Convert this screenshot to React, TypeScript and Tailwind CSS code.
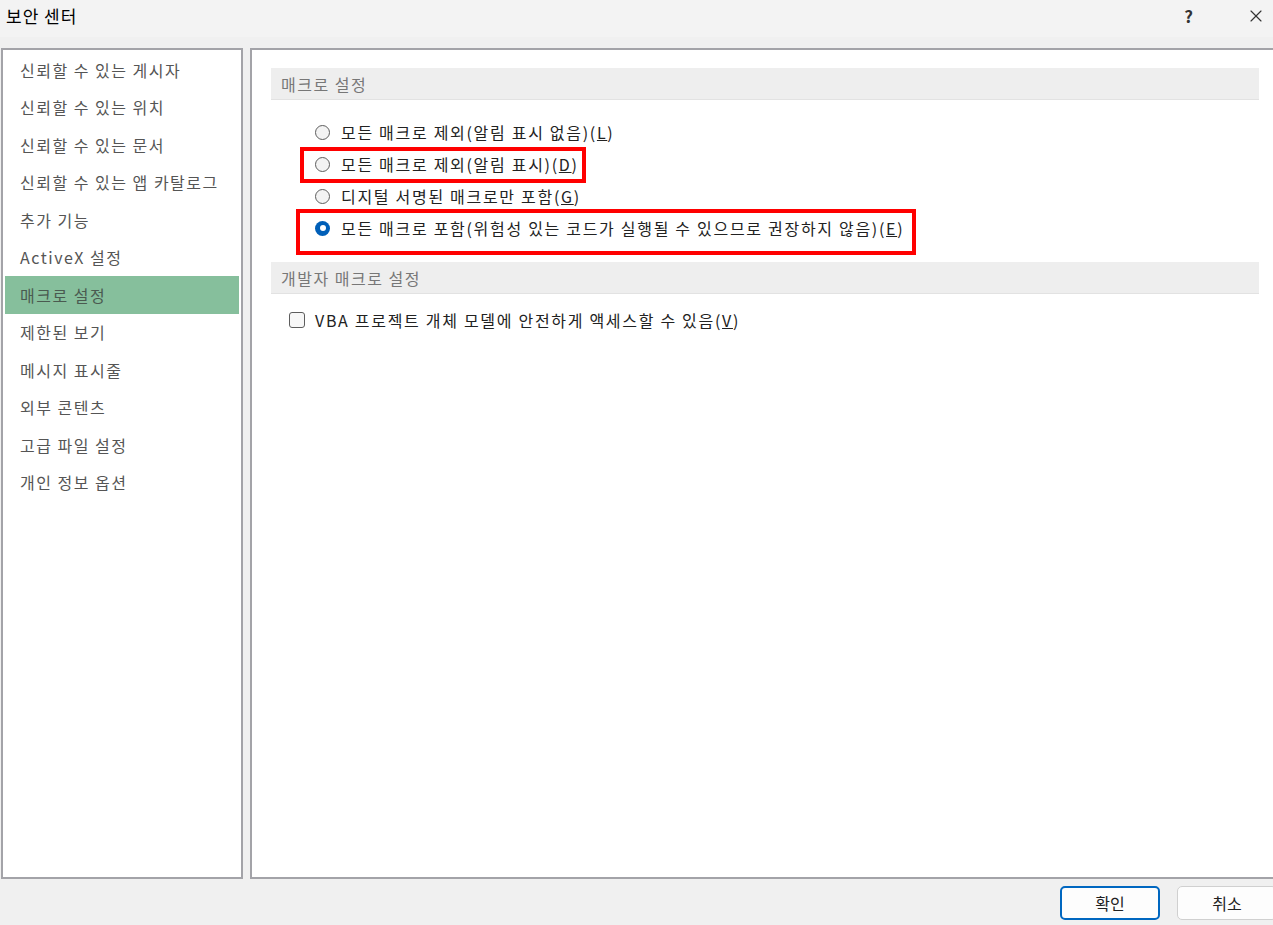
import React from 'react';
import { X } from 'lucide-react';

const navItems = [
  '신뢰할 수 있는 게시자',
  '신뢰할 수 있는 위치',
  '신뢰할 수 있는 문서',
  '신뢰할 수 있는 앱 카탈로그',
  '추가 기능',
  'ActiveX 설정',
  '매크로 설정',
  '제한된 보기',
  '메시지 표시줄',
  '외부 콘텐츠',
  '고급 파일 설정',
  '개인 정보 옵션',
];

const macroOptions = [
  { label: '모든 매크로 제외(알림 표시 없음)', key: 'L', checked: false, mark: null },
  { label: '모든 매크로 제외(알림 표시)', key: 'D', checked: false, mark: 'small' },
  { label: '디지털 서명된 매크로만 포함', key: 'G', checked: false, mark: null },
  { label: '모든 매크로 포함(위험성 있는 코드가 실행될 수 있으므로 권장하지 않음)', key: 'E', checked: true, mark: 'wide' },
];

const Radio: React.FC<{ checked: boolean }> = ({ checked }) =>
  checked ? (
    <span className="w-[15px] h-[15px] rounded-full bg-[#005fb8] flex items-center justify-center shrink-0">
      <span className="w-[6px] h-[6px] rounded-full bg-white" />
    </span>
  ) : (
    <span className="w-[15px] h-[15px] rounded-full border border-[#5d5d5d] bg-[#f3f3f3] shrink-0" />
  );

const SectionHeader: React.FC<{ title: string }> = ({ title }) => (
  <div className="h-[32px] bg-[#eeeeee] border-b border-[#e2e2e2] flex items-center pl-[10px] text-[16px] tracking-[1.5px] text-[#777777]">
    {title}
  </div>
);

export default function App() {
  return (
    <div
      className="relative w-[1273px] h-[925px] overflow-hidden bg-[#f0f0f0] text-[#222222]"
      style={{ fontFamily: '"Malgun Gothic", "Noto Sans CJK KR", "Noto Sans", sans-serif' }}
    >
      {/* Title bar */}
      <div className="h-[37px] bg-[#f3f3f3] flex items-center justify-between pl-[6px]">
        <span className="text-[17px] tracking-[1px] text-black leading-none -mt-[6px]">보안 센터</span>
        <div className="flex items-center -mt-[6px]">
          <span className="text-[17px] font-bold text-[#333] mr-[53px]">?</span>
          <X className="w-[20px] h-[20px] text-[#333] mr-[7px]" strokeWidth={1.4} />
        </div>
      </div>

      {/* Body */}
      <div className="flex mt-[11px] h-[831px]">
        {/* Left nav */}
        <div className="ml-[1px] w-[242px] h-full bg-white border-2 border-[#a3a3a8] pt-[1px] px-[2px]">
          {navItems.map((item) => (
            <div
              key={item}
              className={`h-[37.5px] flex items-center pl-[15px] text-[16px] tracking-[1.5px] ${
                item === '매크로 설정' ? 'bg-[#86bf9c] text-[#4a5a50]' : 'text-[#555555]'
              }`}
            >
              {item}
            </div>
          ))}
        </div>

        {/* Right content */}
        <div className="ml-[7px] flex-1 h-full bg-white border-2 border-r-0 border-[#a3a3a8] pl-[19px] pr-[14px] pt-[18px]">
          <SectionHeader title="매크로 설정" />

          <div className="mt-[16px] ml-[44px]">
            {macroOptions.map((opt) => (
              <div key={opt.key} className="relative h-[32px] flex items-center text-[16px] tracking-[1.7px]">
                <Radio checked={opt.checked} />
                <span className="ml-[11px] whitespace-nowrap">
                  {opt.label}(<span className="underline">{opt.key}</span>)
                </span>
                {opt.mark === 'small' && (
                  <div className="absolute -left-[15px] -top-[1px] w-[286px] h-[36px] border-4 border-[#ff0000]" />
                )}
                {opt.mark === 'wide' && (
                  <div className="absolute -left-[19px] -top-[3px] w-[620px] h-[46px] border-4 border-[#ff0000]" />
                )}
              </div>
            ))}
          </div>

          <div className="mt-[18px]">
            <SectionHeader title="개발자 매크로 설정" />
          </div>

          <div className="mt-[17px] ml-[18px] h-[18px] flex items-center text-[16px] tracking-[1.7px]">
            <span className="w-[16px] h-[16px] rounded-[3px] border border-[#5d5d5d] bg-[#f7f7f7] shrink-0" />
            <span className="ml-[10px] whitespace-nowrap">
              VBA 프로젝트 개체 모델에 안전하게 액세스할 수 있음(<span className="underline">V</span>)
            </span>
          </div>
        </div>
      </div>

      {/* Footer buttons */}
      <div className="flex justify-end gap-[17px] mt-[7px] -mr-[4px]">
        <button className="w-[100px] h-[34px] bg-[#fdfdfd] border-2 border-[#0067c0] rounded-[5px] text-[16px] text-[#222]">
          확인
        </button>
        <button className="w-[100px] h-[34px] bg-[#fdfdfd] border border-[#d0d0d0] rounded-[5px] text-[16px] text-[#222]">
          취소
        </button>
      </div>
    </div>
  );
}
